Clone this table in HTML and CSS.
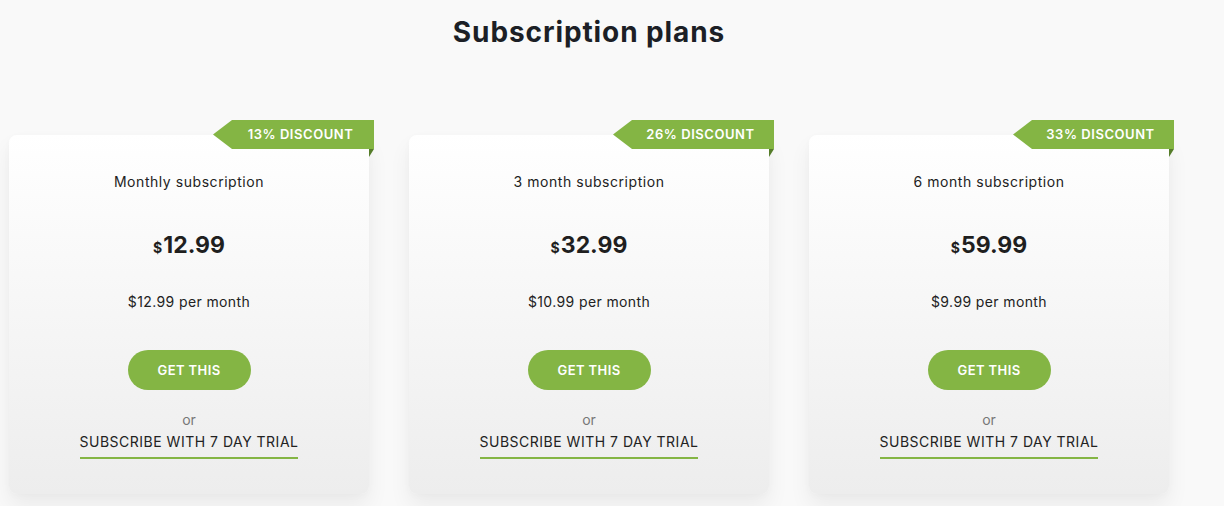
FILE: index.html
```html
<!DOCTYPE html>
<html lang="en">
<head>
<meta charset="utf-8">
<title>Subscription plans</title>
<link rel="stylesheet" href="styles.css">
</head>
<body>
<main class="page">
  <h1 class="title">Subscription plans</h1>
  <div class="plans">
    <div class="card">
      <div class="ribbon">13% DISCOUNT</div>
      <div class="name">Monthly subscription</div>
      <div class="price"><span class="cur">$</span>12.99</div>
      <div class="per">$12.99 per month</div>
      <a class="btn">GET THIS</a>
      <div class="or">or</div>
      <a class="trial">SUBSCRIBE WITH 7 DAY TRIAL</a>
    </div>
    <div class="card">
      <div class="ribbon">26% DISCOUNT</div>
      <div class="name">3 month subscription</div>
      <div class="price"><span class="cur">$</span>32.99</div>
      <div class="per">$10.99 per month</div>
      <a class="btn">GET THIS</a>
      <div class="or">or</div>
      <a class="trial">SUBSCRIBE WITH 7 DAY TRIAL</a>
    </div>
    <div class="card">
      <div class="ribbon">33% DISCOUNT</div>
      <div class="name">6 month subscription</div>
      <div class="price"><span class="cur">$</span>59.99</div>
      <div class="per">$9.99 per month</div>
      <a class="btn">GET THIS</a>
      <div class="or">or</div>
      <a class="trial">SUBSCRIBE WITH 7 DAY TRIAL</a>
    </div>
  </div>
</main>
</body>
</html>
```

FILE: styles.css
```css
html, body {
  margin: 0;
  padding: 0;
  background: #f9f9f9;
  font-family: "Inter", "Open Sans", sans-serif;
  color: #222;
}
body {
  height: 506px;
  overflow: hidden;
}
.page {
  width: 1160px;
  margin-left: 9px;
}
.title {
  margin: 0;
  padding-top: 14px;
  height: 36px;
  line-height: 36px;
  font-size: 28px;
  font-weight: 700;
  letter-spacing: 0.9px;
  text-align: center;
  color: #1c1f26;
}
.plans {
  display: flex;
  gap: 40px;
  margin-top: 85px;
}
.card {
  position: relative;
  width: 360px;
  box-sizing: border-box;
  padding: 37px 0 35px;
  border-radius: 8px;
  background: linear-gradient(#ffffff, #ededed);
  box-shadow: 0 12px 22px rgba(0,0,0,0.06), 0 2px 8px rgba(0,0,0,0.02);
  display: flex;
  flex-direction: column;
  align-items: center;
}
.ribbon {
  position: absolute;
  top: -15px;
  right: -5px;
  width: 161px;
  height: 29px;
  box-sizing: border-box;
  padding-left: 14px;
  line-height: 29px;
  text-align: center;
  font-size: 13px;
  font-weight: 600;
  letter-spacing: 0.55px;
  color: #fff;
  background: #84b544;
  clip-path: polygon(0 50%, 19px 0, 100% 0, 100% 100%, 19px 100%);
}
.card::after {
  content: "";
  position: absolute;
  top: 14px;
  right: -5px;
  width: 5px;
  height: 8px;
  background: #567d2a;
  clip-path: polygon(0 0, 100% 0, 0 100%);
}
.name {
  font-size: 14px;
  line-height: 20px;
  letter-spacing: 0.55px;
  color: #222;
}
.price {
  margin-top: 38px;
  font-size: 23px;
  font-weight: 700;
  line-height: 30px;
  color: #1f1f1f;
}
.cur {
  font-size: 14px;
  margin-right: 1px;
}
.per {
  margin-top: 29px;
  font-size: 14px;
  line-height: 20px;
  letter-spacing: 0.38px;
  color: #222;
}
.btn {
  margin-top: 38px;
  width: 123px;
  height: 40px;
  line-height: 40px;
  border-radius: 20px;
  background: #84b544;
  color: #fff;
  font-size: 13px;
  font-weight: 600;
  letter-spacing: 0.4px;
  text-align: center;
}
.or {
  margin-top: 20px;
  font-size: 14px;
  line-height: 20px;
  color: #777;
}
.trial {
  margin-top: 2px;
  font-size: 14px;
  line-height: 20px;
  letter-spacing: 0.5px;
  padding-bottom: 5px;
  border-bottom: 2px solid #84b544;
  color: #222;
}
```
